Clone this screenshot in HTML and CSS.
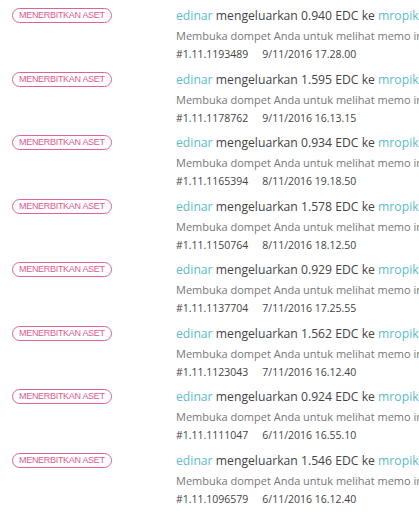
FILE: index.html
```html
<!DOCTYPE html>
<html>
<head>
<meta charset="utf-8">
<link rel="stylesheet" href="styles.css">
</head>
<body>
<div class="list">
  <div class="row">
    <div class="col-badge"><span class="badge">MENERBITKAN ASET</span></div>
    <div class="col-info">
      <div class="line1"><span class="acc">edinar</span> mengeluarkan 0.940 EDC ke <span class="acc">mropik7</span></div>
      <div class="line2">Membuka dompet Anda untuk melihat memo ini</div>
      <div class="line3">#1.11.1193489<span class="date">9/11/2016 17.28.00</span></div>
    </div>
  </div>
  <div class="row">
    <div class="col-badge"><span class="badge">MENERBITKAN ASET</span></div>
    <div class="col-info">
      <div class="line1"><span class="acc">edinar</span> mengeluarkan 1.595 EDC ke <span class="acc">mropik7</span></div>
      <div class="line2">Membuka dompet Anda untuk melihat memo ini</div>
      <div class="line3">#1.11.1178762<span class="date">9/11/2016 16.13.15</span></div>
    </div>
  </div>
  <div class="row">
    <div class="col-badge"><span class="badge">MENERBITKAN ASET</span></div>
    <div class="col-info">
      <div class="line1"><span class="acc">edinar</span> mengeluarkan 0.934 EDC ke <span class="acc">mropik7</span></div>
      <div class="line2">Membuka dompet Anda untuk melihat memo ini</div>
      <div class="line3">#1.11.1165394<span class="date">8/11/2016 19.18.50</span></div>
    </div>
  </div>
  <div class="row">
    <div class="col-badge"><span class="badge">MENERBITKAN ASET</span></div>
    <div class="col-info">
      <div class="line1"><span class="acc">edinar</span> mengeluarkan 1.578 EDC ke <span class="acc">mropik7</span></div>
      <div class="line2">Membuka dompet Anda untuk melihat memo ini</div>
      <div class="line3">#1.11.1150764<span class="date">8/11/2016 18.12.50</span></div>
    </div>
  </div>
  <div class="row">
    <div class="col-badge"><span class="badge">MENERBITKAN ASET</span></div>
    <div class="col-info">
      <div class="line1"><span class="acc">edinar</span> mengeluarkan 0.929 EDC ke <span class="acc">mropik7</span></div>
      <div class="line2">Membuka dompet Anda untuk melihat memo ini</div>
      <div class="line3">#1.11.1137704<span class="date">7/11/2016 17.25.55</span></div>
    </div>
  </div>
  <div class="row">
    <div class="col-badge"><span class="badge">MENERBITKAN ASET</span></div>
    <div class="col-info">
      <div class="line1"><span class="acc">edinar</span> mengeluarkan 1.562 EDC ke <span class="acc">mropik7</span></div>
      <div class="line2">Membuka dompet Anda untuk melihat memo ini</div>
      <div class="line3">#1.11.1123043<span class="date">7/11/2016 16.12.40</span></div>
    </div>
  </div>
  <div class="row">
    <div class="col-badge"><span class="badge">MENERBITKAN ASET</span></div>
    <div class="col-info">
      <div class="line1"><span class="acc">edinar</span> mengeluarkan 0.924 EDC ke <span class="acc">mropik7</span></div>
      <div class="line2">Membuka dompet Anda untuk melihat memo ini</div>
      <div class="line3">#1.11.1111047<span class="date">6/11/2016 16.55.10</span></div>
    </div>
  </div>
  <div class="row">
    <div class="col-badge"><span class="badge">MENERBITKAN ASET</span></div>
    <div class="col-info">
      <div class="line1"><span class="acc">edinar</span> mengeluarkan 1.546 EDC ke <span class="acc">mropik7</span></div>
      <div class="line2">Membuka dompet Anda untuk melihat memo ini</div>
      <div class="line3">#1.11.1096579<span class="date">6/11/2016 16.12.40</span></div>
    </div>
  </div>
</div>
</body>
</html>
```

FILE: styles.css
```css
html, body {
  margin: 0;
  padding: 0;
  background: #ffffff;
}
body {
  width: 419px;
  height: 518px;
  overflow: hidden;
  font-family: "Open Sans", "Liberation Sans", sans-serif;
}
.list {
  display: flex;
  flex-direction: column;
  padding-top: 6px;
}
.row {
  display: flex;
  height: 63.5px;
  flex-shrink: 0;
}
.col-badge {
  width: 176px;
  flex-shrink: 0;
  display: flex;
  align-items: flex-start;
  padding-left: 12px;
  padding-top: 2px;
  box-sizing: border-box;
}
.badge {
  display: block;
  border: 1px solid #dc6394;
  border-radius: 8px;
  color: #dc5a8f;
  font-family: "Liberation Sans", Arial, sans-serif;
  font-size: 9px;
  letter-spacing: -0.3px;
  line-height: 13px;
  height: 13px;
  padding: 0 6px;
  white-space: nowrap;
}
.col-info {
  flex: 1;
  min-width: 0;
  overflow: hidden;
  white-space: nowrap;
}
.line1 {
  font-size: 12.2px;
  line-height: 20px;
  color: #444;
}
.acc {
  color: #5dbcc6;
}
.line2 {
  font-size: 11px;
  line-height: 19px;
  color: #777;
}
.line3 {
  font-size: 10.5px;
  line-height: 19px;
  color: #444;
}
.date {
  margin-left: 14px;
}
```
